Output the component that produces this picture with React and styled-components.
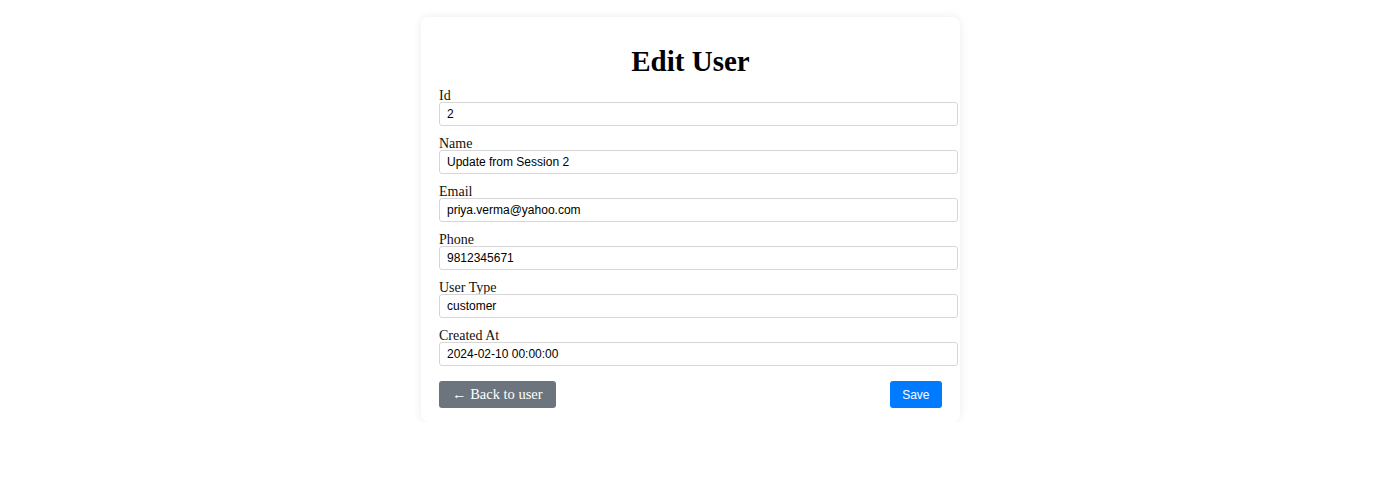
import styled, { createGlobalStyle } from "styled-components";

const GlobalStyle = createGlobalStyle`
  body {
    margin: 0;
    background: #ffffff;
    font-family: "Liberation Serif", "Times New Roman", serif;
  }
`;

const Page = styled.div`
  display: flex;
  justify-content: center;
  padding-top: 17px;
`;

const Card = styled.div`
  width: 503px;
  padding: 18px 18px 14px;
  background: #fff;
  border-radius: 8px;
  box-shadow: 0 0 10px rgba(0, 0, 0, 0.08);
`;

const Title = styled.h2`
  text-align: center;
  font-size: 29px;
  line-height: 32px;
  font-weight: bold;
  margin: 10px 0 12px;
  color: #000;
`;

const Field = styled.div`
  margin-bottom: 11px;
`;

const Label = styled.label`
  display: block;
  font-size: 14px;
  line-height: 13px;
  color: #111;
`;

const Input = styled.input`
  width: 100%;
  box-sizing: content-box;
  padding: 4px 7px;
  font-family: "Liberation Sans", Arial, sans-serif;
  font-size: 12px;
  line-height: 14px;
  color: #000;
  border: 1px solid #d6d6d6;
  border-radius: 3px;
  outline: none;
`;

const Actions = styled.div`
  display: flex;
  justify-content: space-between;
  align-items: center;
  margin-top: 15px;
`;

const Button = styled.button`
  height: 27px;
  padding: 0 ${(p) => p.$pad}px;
  border: none;
  border-radius: 3px;
  color: #fff;
  background: ${(p) => p.$bg};
  font-family: ${(p) =>
    p.$sans ? '"Liberation Sans", Arial, sans-serif' : '"Liberation Serif", "Times New Roman", serif'};
  font-size: ${(p) => (p.$sans ? "12px" : "14.5px")};
  cursor: pointer;
`;

const fields = [
  { label: "Id", value: "2" },
  { label: "Name", value: "Update from Session 2" },
  { label: "Email", value: "priya.verma@yahoo.com" },
  { label: "Phone", value: "9812345671" },
  { label: "User Type", value: "customer" },
  { label: "Created At", value: "2024-02-10 00:00:00" },
];

export default function App() {
  return (
    <>
      <GlobalStyle />
      <Page>
        <Card>
          <Title>Edit User</Title>
          {fields.map((f) => (
            <Field key={f.label}>
              <Label>{f.label}</Label>
              <Input defaultValue={f.value} />
            </Field>
          ))}
          <Actions>
            <Button $bg="#6c757d" $pad={13}>← Back to user</Button>
            <Button $bg="#007bff" $sans $pad={12.5}>Save</Button>
          </Actions>
        </Card>
      </Page>
    </>
  );
}
